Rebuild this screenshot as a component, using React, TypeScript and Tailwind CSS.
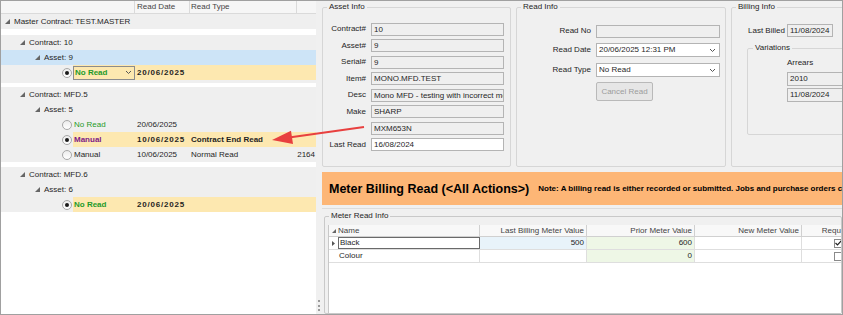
import React from 'react';

// --- SMALL GLYPHS ---
function Expander({ size = 5 }: { size?: number }) {
  return (
    <svg width={size} height={size} viewBox="0 0 5 5" className="shrink-0">
      <polygon points="5,0 5,5 0,5" fill="#666" />
    </svg>
  );
}

function Radio({ on }: { on?: boolean }) {
  return (
    <span className="w-[10px] h-[10px] rounded-full border border-[#a8a8a8] bg-linear-to-b from-[#ececec] to-white flex items-center justify-center">
      {on && <span className="w-[4px] h-[4px] rounded-full bg-[#1a1a1a]" />}
    </span>
  );
}

function Chevron() {
  return (
    <svg width="7" height="5" viewBox="0 0 7 5" className="shrink-0">
      <polyline points="1,1 3.5,3.5 6,1" fill="none" stroke="#555" strokeWidth="1" />
    </svg>
  );
}

// --- TREE ROWS ---
function NodeRow({ pad, label }: { pad: string; label: string }) {
  return (
    <div className={`h-[15px] flex items-center gap-[4px] ${pad}`}>
      <Expander />
      <span>{label}</span>
    </div>
  );
}

type Read = {
  on?: boolean;
  kind: string;
  date: string;
  type?: string;
  value?: string;
  hl?: boolean;
  editor?: boolean;
  tone: 'green' | 'purple' | 'plain';
};

function ReadRow({ r }: { r: Read }) {
  const toneCls =
    r.tone === 'green' ? 'text-[#1f9a2a]' : r.tone === 'purple' ? 'text-[#7d1a86]' : 'text-[#1f1f1f]';
  const bold = r.hl ? 'font-bold' : '';
  return (
    <div className="h-[15px] flex">
      <div className="w-[72px] flex items-center pl-[61px]">
        <Radio on={r.on} />
      </div>
      <div className={`flex-1 flex items-center ${r.hl ? 'bg-[#fde8b0]' : ''}`}>
        <div className="w-[62px] h-full flex items-center">
          {r.editor ? (
            <div className="w-full h-[14px] border border-[#8c8c8c] flex items-center justify-between pl-[1px] pr-[2px]">
              <span className={`${toneCls} font-bold`}>{r.kind}</span>
              <Chevron />
            </div>
          ) : (
            <span className={`pl-[1px] ${toneCls} ${bold}`}>{r.kind}</span>
          )}
        </div>
        <div className={`w-[55px] pl-[2px] ${r.hl ? 'font-bold tracking-[0.8px]' : ''}`}>{r.date}</div>
        <div className={`w-[107px] pl-[1px] ${bold}`}>{r.type}</div>
        <div className="flex-1 text-right pr-[1px]">{r.value}</div>
      </div>
    </div>
  );
}

// --- FORM BITS ---
function Field({ value, white, w }: { value?: string; white?: boolean; w: string }) {
  return (
    <div
      className={`${w} h-[13px] border border-[#b4b4b4] pl-[2px] leading-[11px] whitespace-nowrap overflow-hidden ${
        white ? 'bg-white' : 'bg-[#efefef]'
      }`}
    >
      {value}
    </div>
  );
}

function Combo({ value }: { value: string }) {
  return (
    <div className="w-[124px] h-[14px] border border-[#b4b4b4] bg-white flex items-center justify-between pl-[2px] pr-[3px]">
      <span>{value}</span>
      <Chevron />
    </div>
  );
}

const assetRows = [
  ['Contract#', '10'],
  ['Asset#', '9'],
  ['Serial#', '9'],
  ['Item#', 'MONO.MFD.TEST'],
  ['Desc', 'Mono MFD - testing with incorrect meter'],
  ['Make', 'SHARP'],
  ['', 'MXM653N'],
];

export default function App() {
  return (
    <div className="relative w-[843px] h-[315px] border border-[#a0a0a0] bg-[#f0f0f0] flex overflow-hidden text-[8px] leading-[10px] text-[#1f1f1f] font-['Liberation_Sans',Arial,sans-serif]">
      {/* Left: read tree */}
      <div className="w-[315px] shrink-0 bg-white flex flex-col">
        <div className="h-[13px] shrink-0 flex bg-[#f6f6f6] border-b border-[#dadada] text-[#444]">
          <div className="w-[134px] border-r border-[#dadada]" />
          <div className="w-[55px] border-r border-[#dadada] pl-[2px] flex items-center">Read Date</div>
          <div className="w-[107px] border-r border-[#dadada] pl-[1px] flex items-center">Read Type</div>
          <div className="flex-1" />
        </div>

        <div className="bg-[#efefef]">
          <NodeRow pad="pl-[4px]" label="Master Contract: TEST.MASTER" />
        </div>
        <div className="h-[6px]" />

        <div className="bg-[#efefef] pb-[3px]">
          <NodeRow pad="pl-[19px]" label="Contract: 10" />
          <div className="bg-[#cde4f7]">
            <NodeRow pad="pl-[34px]" label="Asset: 9" />
          </div>
          <ReadRow r={{ on: true, kind: 'No Read', date: '20/06/2025', hl: true, editor: true, tone: 'green' }} />
        </div>
        <div className="h-[4px]" />

        <div className="bg-[#efefef]">
          <NodeRow pad="pl-[19px]" label="Contract: MFD.5" />
          <NodeRow pad="pl-[34px]" label="Asset: 5" />
          <ReadRow r={{ kind: 'No Read', date: '20/06/2025', tone: 'green' }} />
          <ReadRow r={{ on: true, kind: 'Manual', date: '10/06/2025', type: 'Contract End Read', hl: true, tone: 'purple' }} />
          <ReadRow r={{ kind: 'Manual', date: '10/06/2025', type: 'Normal Read', value: '2164', tone: 'plain' }} />
        </div>
        <div className="h-[5px]" />

        <div className="bg-[#efefef]">
          <NodeRow pad="pl-[19px]" label="Contract: MFD.6" />
          <NodeRow pad="pl-[34px]" label="Asset: 6" />
          <ReadRow r={{ on: true, kind: 'No Read', date: '20/06/2025', hl: true, tone: 'green' }} />
        </div>
      </div>

      {/* Splitter */}
      <div className="w-[5px] shrink-0 flex flex-col justify-end items-center pb-[3px]">
        <div className="w-0 h-[11px] border-l-2 border-dotted border-[#9a9a9a]" />
      </div>

      {/* Right: details */}
      <div className="flex-1 min-w-0 overflow-hidden flex flex-col pl-[1px]">
        <div className="h-[166px] shrink-0 pt-[1px] flex gap-[5px]">
          <fieldset className="w-[189px] shrink-0 border border-[#d6d6d6] rounded-[2px]">
            <legend className="ml-[4px] px-[2px]">Asset Info</legend>
            <div className="pt-[10.5px] flex flex-col gap-[3.5px]">
              {assetRows.map(([l, v], i) => (
                <div key={i} className="flex items-center">
                  <div className="w-[43px] text-right">{l}</div>
                  <Field w="ml-[5px] w-[133px]" value={v} />
                </div>
              ))}
              <div className="flex items-center">
                <div className="w-[43px] text-right">Last Read</div>
                <Field w="ml-[5px] w-[133px]" value="16/08/2024" white />
              </div>
            </div>
          </fieldset>

          <fieldset className="w-[210px] shrink-0 border border-[#d6d6d6] rounded-[2px]">
            <legend className="ml-[4px] px-[2px]">Read Info</legend>
            <div className="pt-[12.5px] flex flex-col">
              <div className="flex items-center">
                <div className="w-[74px] text-right">Read No</div>
                <Field w="ml-[5px] w-[124px]" />
              </div>
              <div className="flex items-center mt-[5.5px]">
                <div className="w-[74px] text-right">Read Date</div>
                <div className="ml-[5px]">
                  <Combo value="20/06/2025 12:31 PM" />
                </div>
              </div>
              <div className="flex items-center mt-[6px]">
                <div className="w-[74px] text-right">Read Type</div>
                <div className="ml-[5px]">
                  <Combo value="No Read" />
                </div>
              </div>
              <button className="ml-[79px] mt-[5px] w-[57px] h-[19px] border border-[#b9b9b9] rounded-[2px] bg-[#e6e6e6] text-[#9c9c9c]">
                Cancel Read
              </button>
            </div>
          </fieldset>

          <fieldset className="w-[170px] shrink-0 border border-[#d6d6d6] rounded-[2px]">
            <legend className="ml-[4px] px-[2px]">Billing Info</legend>
            <div className="pt-[12px] pl-[16px] flex items-center">
              <div className="w-[39px]">Last Billed</div>
              <Field w="w-[46px]" value="11/08/2024" />
            </div>
            <fieldset className="ml-[15px] mt-[6px] h-[92px] border border-[#d6d6d6] rounded-[2px]">
              <legend className="ml-[5px] px-[2px]">Variations</legend>
              <div className="pl-[39px] pt-[5px] flex flex-col">
                <div>Arrears</div>
                <div className="mt-[4px] flex flex-col gap-[2px]">
                  <div className="w-[80px] h-[14px] border border-[#b4b4b4] bg-[#efefef] pl-[2px] flex items-center">2010</div>
                  <div className="w-[80px] h-[14px] border border-[#b4b4b4] bg-[#efefef] pl-[2px] flex items-center">11/08/2024</div>
                </div>
              </div>
            </fieldset>
          </fieldset>
        </div>

        {/* Banner */}
        <div className="mt-[5px] h-[33px] shrink-0 bg-[#fdb676] flex items-center pl-[7px] whitespace-nowrap text-black">
          <span className="text-[12.5px] leading-[14px] font-bold">Meter Billing Read (&lt;All Actions&gt;)</span>
          <span className="ml-[9px] font-bold">
            Note: A billing read is either recorded or submitted. Jobs and purchase orders cannot be raised
          </span>
        </div>

        {/* Meter reads */}
        <div className="mt-[3px] flex-1 min-h-0 border-t border-[#dcdcdc] pt-[2px] flex">
          <fieldset className="ml-[2px] flex-1 min-w-0 border border-[#c9c9c9] rounded-[2px] flex flex-col">
            <legend className="ml-[4px] px-[2px]">Meter Read Info</legend>
            <div className="ml-[3px] mt-[4px] flex-1 bg-white border-l border-[#c8c8c8] overflow-hidden whitespace-nowrap">
              <div className="h-[12px] flex bg-[#f8f8f8] border-b border-[#d0d0d0] text-[#444]">
                <div className="w-[9px] shrink-0 flex items-center justify-center">
                  <Expander size={4} />
                </div>
                <div className="w-[142px] shrink-0 border-r border-[#d0d0d0] flex items-center">Name</div>
                <div className="w-[107px] shrink-0 border-r border-[#d0d0d0] flex items-center justify-end pr-[2px]">
                  Last Billing Meter Value
                </div>
                <div className="w-[108px] shrink-0 border-r border-[#d0d0d0] flex items-center justify-end pr-[2px]">
                  Prior Meter Value
                </div>
                <div className="w-[107px] shrink-0 border-r border-[#d0d0d0] flex items-center justify-end pr-[2px]">
                  New Meter Value
                </div>
                <div className="w-[72px] shrink-0 flex items-center justify-center">Required</div>
              </div>

              {[
                { name: 'Black', last: '500', prior: '600', checked: true, focus: true },
                { name: 'Colour', last: '', prior: '0', checked: false, focus: false },
              ].map((m) => (
                <div key={m.name} className="h-[13px] flex border-b border-[#dedede]">
                  <div className="w-[9px] shrink-0 flex items-center justify-center">
                    {m.focus && (
                      <svg width="3" height="5" viewBox="0 0 3 5">
                        <polygon points="0,0 3,2.5 0,5" fill="#555" />
                      </svg>
                    )}
                  </div>
                  <div
                    className={`w-[142px] shrink-0 flex items-center pl-[1px] ${
                      m.focus ? 'border border-[#6a6a6a]' : 'border-r border-[#dedede]'
                    }`}
                  >
                    {m.name}
                  </div>
                  <div
                    className={`w-[107px] shrink-0 border-r border-[#dedede] flex items-center justify-end pr-[2px] ${
                      m.focus ? 'bg-[#e8f3fa]' : ''
                    }`}
                  >
                    {m.last}
                  </div>
                  <div className="w-[108px] shrink-0 border-r border-[#dedede] bg-[#eef7e6] flex items-center justify-end pr-[2px]">
                    {m.prior}
                  </div>
                  <div className="w-[107px] shrink-0 border-r border-[#dedede]" />
                  <div className="w-[72px] shrink-0 flex items-center justify-center">
                    <span className="w-[9px] h-[9px] border border-[#8a8a8a] bg-white flex items-center justify-center">
                      {m.checked && (
                        <svg width="7" height="6" viewBox="0 0 7 6">
                          <polyline points="0.5,3 2.5,5 6.5,0.5" fill="none" stroke="#222" strokeWidth="1.2" />
                        </svg>
                      )}
                    </span>
                  </div>
                </div>
              ))}
            </div>
          </fieldset>
        </div>
      </div>

      {/* Annotation arrow */}
      <svg className="absolute left-0 top-0 pointer-events-none" width="843" height="315">
        <line x1="363" y1="126" x2="288" y2="136.5" stroke="#e8403f" strokeWidth="2" />
        <polygon points="271,139 290,129.8 292,143" fill="#e8403f" />
      </svg>
    </div>
  );
}
